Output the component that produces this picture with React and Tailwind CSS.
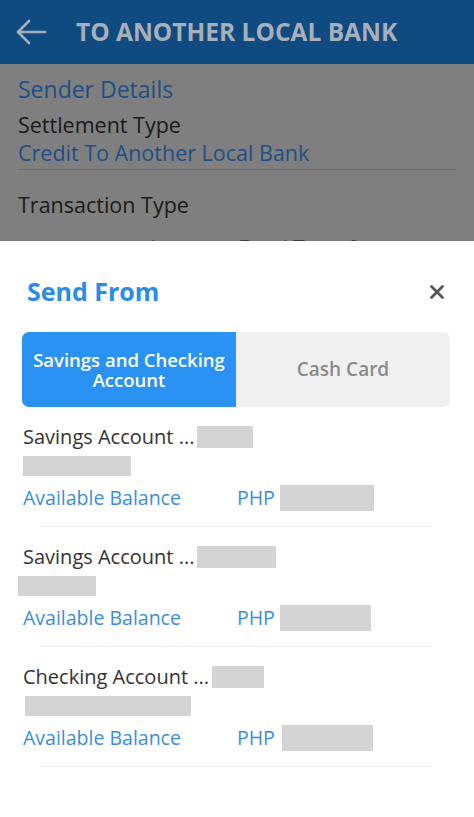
import { X } from "lucide-react";

const accounts = [
  { name: "Savings Account ...", mask: "w-[56px] ml-[3px]", sub: "w-[108px] ml-0", bal: "w-[94px] ml-[5px]" },
  { name: "Savings Account ...", mask: "w-[79px] ml-[3px]", sub: "w-[78px] -ml-[5px]", bal: "w-[91px] ml-[5px]" },
  { name: "Checking Account ...", mask: "w-[52px] ml-[3px]", sub: "w-[166px] ml-[2px]", bal: "w-[91px] ml-[7px]" },
];

const BackArrow = () => (
  <svg width="32" height="28" viewBox="0 0 32 28" fill="none" stroke="#a7b0ba" strokeWidth="2.6" strokeLinecap="round" strokeLinejoin="round">
    <path d="M30 14H3" />
    <path d="M14 3L3 14l11 11" />
  </svg>
);

const AccountRow = ({ acc }) => (
  <div className="pt-[17px]">
    <div className="px-[23px] h-[26px] flex items-center text-[20px] text-[#333333]">
      <span>{acc.name}</span>
      <span className={`inline-block h-[22px] bg-[#d4d4d4] ${acc.mask}`} />
    </div>
    <div className="px-[23px] mt-[6px] h-[20px] flex">
      <span className={`inline-block h-[20px] bg-[#d4d4d4] ${acc.sub}`} />
    </div>
    <div className="px-[23px] mt-[9px] h-[26px] flex items-center text-[19.5px] text-[#3a8ee0]">
      <span className="w-[214px]">Available Balance</span>
      <span>PHP</span>
      <span className={`inline-block h-[26px] bg-[#d4d4d4] ${acc.bal}`} />
    </div>
    <div className="mt-[15px] ml-[40px] mr-[42px] h-px bg-[#ececec]" />
  </div>
);

export default function App() {
  return (
    <div className="w-[474px] h-[817px] bg-white overflow-hidden" style={{ fontFamily: '"Open Sans", "Liberation Sans", sans-serif' }}>
      {/* app bar behind the scrim */}
      <div className="h-16 bg-[#0f4a80] flex items-center pl-[15px] gap-[29px]">
        <BackArrow />
        <span className="text-[24.5px] font-bold text-[#a7b0ba]">TO ANOTHER LOCAL BANK</span>
      </div>

      {/* dimmed form under the sheet */}
      <div className="h-[177px] bg-[#7f7f7f] px-[18px] pt-[11px] overflow-hidden">
        <div className="h-[28px] flex items-center text-[23px] text-[#1d4f86]">Sender Details</div>
        <div className="mt-[8px] h-[28px] flex items-center text-[21.5px] text-[#1a1a1a]">Settlement Type</div>
        <div className="h-[28px] flex items-center text-[21.5px] text-[#1d4f86]">Credit To Another Local Bank</div>
        <div className="mt-[2px] h-px bg-[#707070]" />
        <div className="mt-[21px] h-[28px] flex items-center text-[21.5px] text-[#1a1a1a]">Transaction Type</div>
        <div className="mt-[16px] h-[28px] flex items-center justify-between text-[21px] text-[#3a3a3a]">
          <span className="pl-[132px]">Instapay Fund Transfer</span>
          <span className="w-[12px] h-[12px] border-r-2 border-b-2 border-[#555] rotate-45 mr-[6px]" />
        </div>
      </div>

      {/* bottom sheet */}
      <div className="bg-white">
        <div className="pt-[36px] pl-[27px] pr-[26px] h-[66px] flex items-center justify-between">
          <span className="text-[25px] font-bold text-[#2a8ce8]">Send From</span>
          <X size={22} strokeWidth={3} className="text-[#555555]" />
        </div>

        <div className="mt-[25px] ml-[22px] mr-[24px] h-[75px] flex rounded-[7px] overflow-hidden bg-[#f0f0f0]">
          <div className="w-[214px] bg-[#2a92f2] flex flex-col items-center justify-center text-center text-white text-[18.5px] font-semibold leading-[20px]">
            <span>Savings and Checking</span>
            <span>Account</span>
          </div>
          <div className="flex-1 flex items-center justify-center text-[19px] font-semibold text-[#8a8a8a]">Cash Card</div>
        </div>

        {accounts.map((acc, i) => (
          <AccountRow key={i} acc={acc} />
        ))}
      </div>
    </div>
  );
}
